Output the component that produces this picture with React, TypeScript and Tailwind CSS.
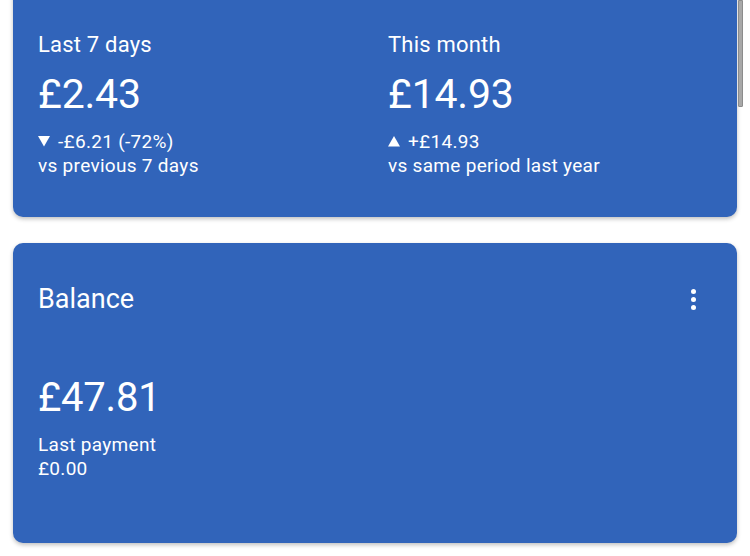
import React from "react";

const font = { fontFamily: "Roboto, 'Noto Sans', sans-serif" };

function Down() {
  return (
    <svg width="12" height="11" viewBox="0 0 12 11" className="inline-block mr-[8px] -mt-[2px] align-middle">
      <path d="M0 0 H12 L6 10.5 Z" fill="white" />
    </svg>
  );
}
function Up() {
  return (
    <svg width="12" height="11" viewBox="0 0 12 11" className="inline-block mr-[8px] -mt-[2px] align-middle">
      <path d="M0 10.5 H12 L6 0 Z" fill="white" />
    </svg>
  );
}

export default function App() {
  return (
    <div className="relative w-[750px] h-[556px] overflow-hidden bg-white text-white" style={font}>
      <div className="flex flex-col gap-[26px] pl-[13px] pr-[13px]">
        <div className="-mt-[20px] rounded-[10px] bg-[#3164ba] shadow-[0_2px_4px_rgba(0,0,0,0.25)] pt-[51px] pb-[39px] px-[25px] flex">
          <div className="w-[350px] flex flex-col">
            <div className="text-[22px] leading-[28px] tracking-[0.2px]">Last 7 days</div>
            <div className="mt-[9px] text-[41px] leading-[52px] tracking-[-0.2px]">£2.43</div>
            <div className="mt-[10px] text-[19px] leading-[24px] tracking-[0.3px]"><Down />-£6.21 (-72%)</div>
            <div className="text-[19px] leading-[24px] tracking-[0.3px]">vs previous 7 days</div>
          </div>
          <div className="flex flex-col">
            <div className="text-[22px] leading-[28px] tracking-[0.2px]">This month</div>
            <div className="mt-[9px] text-[41px] leading-[52px] tracking-[-0.2px]">£14.93</div>
            <div className="mt-[10px] text-[19px] leading-[24px] tracking-[0.3px]"><Up />+£14.93</div>
            <div className="text-[19px] leading-[24px] tracking-[0.3px]">vs same period last year</div>
          </div>
        </div>
        <div className="rounded-[10px] bg-[#3164ba] shadow-[0_2px_4px_rgba(0,0,0,0.25)] pt-[38px] pb-[62px] px-[25px] flex flex-col">
          <div className="flex items-center justify-between h-[36px]">
            <div className="text-[27px] leading-[36px]">Balance</div>
            <div className="mr-[16px] flex flex-col items-center gap-[3px]">
              <div className="w-[5px] h-[5px] rounded-full bg-white" />
              <div className="w-[5px] h-[5px] rounded-full bg-white" />
              <div className="w-[5px] h-[5px] rounded-full bg-white" />
            </div>
          </div>
          <div className="mt-[55px] text-[40px] leading-[52px] tracking-[-0.2px]">£47.81</div>
          <div className="mt-[9px] text-[19px] leading-[24px] tracking-[0.3px]">Last payment</div>
          <div className="text-[19px] leading-[24px] tracking-[0.3px]">£0.00</div>
        </div>
      </div>
      <div className="absolute left-[738px] top-0 w-[5px] h-[107px] bg-[#a8a8a8] border border-[#8c8c8c] rounded-b-[1px]" />
    </div>
  );
}
